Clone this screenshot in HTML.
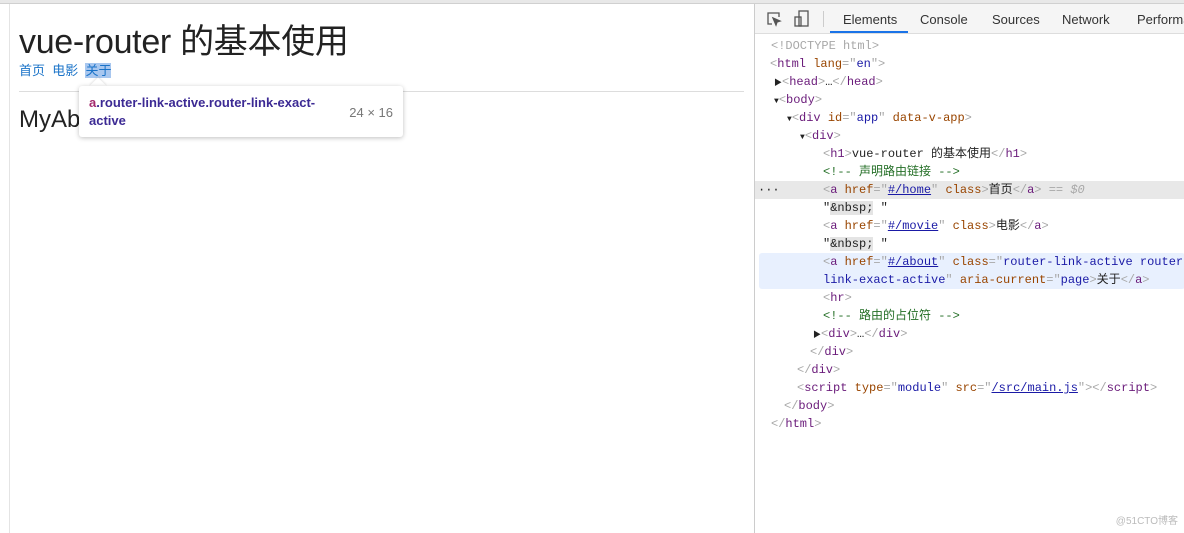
<!DOCTYPE html>
<html><head><style>
*{margin:0;padding:0;box-sizing:border-box}
body{width:1184px;height:533px;background:#fff;position:relative;overflow:hidden;font-family:"Liberation Sans","Noto Sans CJK SC",sans-serif}
.top{position:absolute;left:0;top:0;width:1184px;height:4px;background:#e8e8e8;border-bottom:1px solid #d0d0d0}
.lb{position:absolute;left:9px;top:4px;width:1px;height:529px;background:#e4e4e4}
h1{position:absolute;left:19px;top:14px;font-size:34px;font-weight:normal;color:#222;white-space:nowrap;letter-spacing:-0.3px}
.links{position:absolute;left:19px;top:60px;font-size:13px;color:#1a73c8}
.links span.act{background:#a8c7ef}
.hr{position:absolute;left:19px;top:91px;width:725px;height:1px;background:#ddd}
.my{position:absolute;left:19px;top:106px;font-size:24px;color:#222}
.tip{position:absolute;left:79px;top:86px;width:324px;height:51px;background:#fff;border-radius:3px;box-shadow:0 1px 5px rgba(0,0,0,.25);font-size:13px;font-weight:bold;color:#3c2a94;padding:8px 10px;line-height:18px}
.tip .t{color:#a42a6e}
.tip .sz{position:absolute;right:10px;top:18px;font-weight:normal;color:#777;font-size:13px}
.arrow{position:absolute;left:92px;top:80px;width:12px;height:12px;background:#fff;transform:rotate(45deg);box-shadow:-1px -1px 2px rgba(0,0,0,.1)}
.dt{position:absolute;left:754px;top:4px;width:430px;height:529px;border-left:1px solid #ccc;background:#fff}
.tabs{height:30px;border-bottom:1px solid #ddd;background:#f5f5f5;position:relative;font-size:13px;color:#333}
.tabs span{position:absolute;top:8px}
.ul{position:absolute;left:75px;top:27px;width:78px;height:2px;background:#1a73e8}
.code{position:absolute;left:0;top:33px;width:430px;font-family:"Liberation Mono","Noto Sans CJK SC",monospace;font-size:12px;line-height:18px;color:#6a1b7a}
.l{height:18px;white-space:nowrap;position:relative}
.g{color:#a8a8a8}.an{color:#994500}.av{color:#1a1aa6}.c{color:#236e25}.u{color:#1a1aa6;text-decoration:underline}.k{color:#222}
.sel{background:#e8e8e8}.hov{background:#e8f0fe;border-radius:3px}
.wm{position:absolute;right:6px;bottom:6px;font-size:10px;color:#bbb}
</style></head><body>
<div class="top"></div><div class="lb"></div>
<h1>vue-router 的基本使用</h1>
<div class="links">首页&nbsp; 电影&nbsp; <span class="act">关于</span></div>
<div class="hr"></div>
<div class="my">MyAbout</div>
<div class="arrow"></div>
<div class="tip"><span class="t">a</span>.router-link-active.router-link-exact-<br>active<span class="sz">24 × 16</span></div>
<div class="dt">
<div class="tabs">
<svg style="position:absolute;left:11px;top:7px" width="16" height="16" viewBox="0 0 16 16" fill="none" stroke="#555" stroke-width="1.3"><path d="M6 13H2V2h11v4"/><path d="M7 7l7 3-3 1-1 3z" fill="#555"/></svg>
<svg style="position:absolute;left:39px;top:6px" width="16" height="18" viewBox="0 0 16 18" fill="none" stroke="#555" stroke-width="1.3"><rect x="5" y="1" width="9" height="15"/><rect x="1" y="7" width="6" height="9"/></svg>
<div style="position:absolute;left:68px;top:7px;width:1px;height:16px;background:#ccc"></div>
<span style="left:88px">Elements</span><span style="left:165px">Console</span><span style="left:237px">Sources</span><span style="left:307px">Network</span><span style="left:382px">Performance</span>
<div class="ul"></div></div>
<div class="code">
<div class="l g" style="padding-left:16px">&lt;!DOCTYPE html&gt;</div>
<div class="l" style="padding-left:15px"><span class="g">&lt;</span>html <span class="an">lang</span><span class="g">="</span><span class="av">en</span><span class="g">"&gt;</span></div>
<div class="l" style="padding-left:19px"><span class="k" style="font-size:8px">▶</span><span class="g">&lt;</span>head<span class="g">&gt;</span><span class="k">…</span><span class="g">&lt;/</span>head<span class="g">&gt;</span></div>
<div class="l" style="padding-left:19px"><span class="k" style="font-size:8px">▼</span><span class="g">&lt;</span>body<span class="g">&gt;</span></div>
<div class="l" style="padding-left:32px"><span class="k" style="font-size:8px">▼</span><span class="g">&lt;</span>div <span class="an">id</span><span class="g">="</span><span class="av">app</span><span class="g">"</span> <span class="an">data-v-app</span><span class="g">&gt;</span></div>
<div class="l" style="padding-left:45px"><span class="k" style="font-size:8px">▼</span><span class="g">&lt;</span>div<span class="g">&gt;</span></div>
<div class="l" style="padding-left:68px"><span class="g">&lt;</span>h1<span class="g">&gt;</span><span class="k">vue-router 的基本使用</span><span class="g">&lt;/</span>h1<span class="g">&gt;</span></div>
<div class="l c" style="padding-left:68px">&lt;!-- 声明路由链接 --&gt;</div>
<div class="l sel" style="padding-left:68px"><span class="k" style="position:absolute;left:3px">···</span><span class="g">&lt;</span>a <span class="an">href</span><span class="g">="</span><span class="u">#/home</span><span class="g">"</span> <span class="an">class</span><span class="g">&gt;</span><span class="k">首页</span><span class="g">&lt;/</span>a<span class="g">&gt; == <i>$0</i></span></div>
<div class="l k" style="padding-left:68px">"<span style="background:#e4e4e4">&amp;nbsp;</span> "</div>
<div class="l" style="padding-left:68px"><span class="g">&lt;</span>a <span class="an">href</span><span class="g">="</span><span class="u">#/movie</span><span class="g">"</span> <span class="an">class</span><span class="g">&gt;</span><span class="k">电影</span><span class="g">&lt;/</span>a<span class="g">&gt;</span></div>
<div class="l k" style="padding-left:68px">"<span style="background:#e4e4e4">&amp;nbsp;</span> "</div>
<div class="hov" style="margin-left:4px">
<div class="l" style="padding-left:64px"><span class="g">&lt;</span>a <span class="an">href</span><span class="g">="</span><span class="u">#/about</span><span class="g">"</span> <span class="an">class</span><span class="g">="</span><span class="av">router-link-active router-</span></div>
<div class="l" style="padding-left:64px"><span class="av">link-exact-active</span><span class="g">"</span> <span class="an">aria-current</span><span class="g">="</span><span class="av">page</span><span class="g">&gt;</span><span class="k">关于</span><span class="g">&lt;/</span>a<span class="g">&gt;</span></div></div>
<div class="l" style="padding-left:68px"><span class="g">&lt;</span>hr<span class="g">&gt;</span></div>
<div class="l c" style="padding-left:68px">&lt;!-- 路由的占位符 --&gt;</div>
<div class="l" style="padding-left:58px"><span class="k" style="font-size:8px">▶</span><span class="g">&lt;</span>div<span class="g">&gt;</span><span class="k">…</span><span class="g">&lt;/</span>div<span class="g">&gt;</span></div>
<div class="l" style="padding-left:55px"><span class="g">&lt;/</span>div<span class="g">&gt;</span></div>
<div class="l" style="padding-left:42px"><span class="g">&lt;/</span>div<span class="g">&gt;</span></div>
<div class="l" style="padding-left:42px"><span class="g">&lt;</span>script <span class="an">type</span><span class="g">="</span><span class="av">module</span><span class="g">"</span> <span class="an">src</span><span class="g">="</span><span class="u">/src/main.js</span><span class="g">"&gt;&lt;/</span>script<span class="g">&gt;</span></div>
<div class="l" style="padding-left:29px"><span class="g">&lt;/</span>body<span class="g">&gt;</span></div>
<div class="l" style="padding-left:16px"><span class="g">&lt;/</span>html<span class="g">&gt;</span></div>
</div>
<div class="wm">@51CTO博客</div>
</div>
</body></html>
